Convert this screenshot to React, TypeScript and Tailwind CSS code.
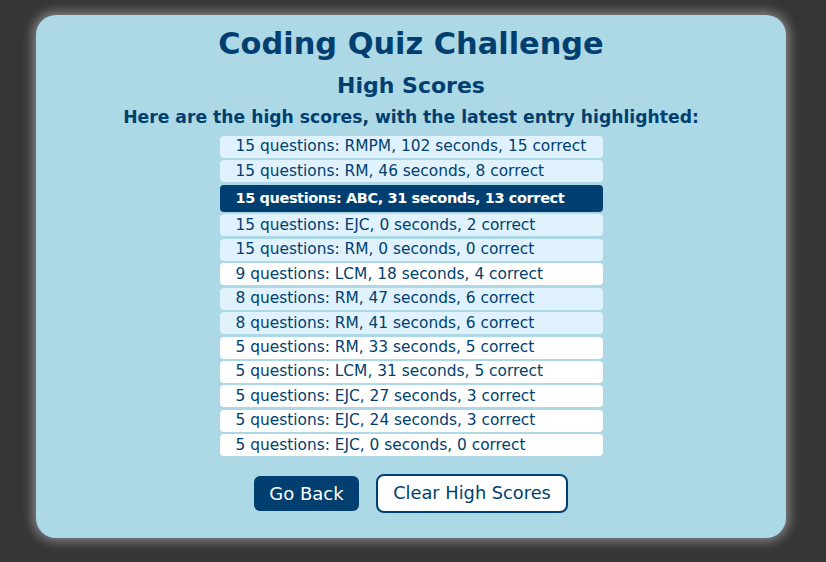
import React from "react";

type Score = { questions: number; initials: string; seconds: number; correct: number; latest?: boolean };

const scores: Score[] = [
  { questions: 15, initials: "RMPM", seconds: 102, correct: 15 },
  { questions: 15, initials: "RM", seconds: 46, correct: 8 },
  { questions: 15, initials: "ABC", seconds: 31, correct: 13, latest: true },
  { questions: 15, initials: "EJC", seconds: 0, correct: 2 },
  { questions: 15, initials: "RM", seconds: 0, correct: 0 },
  { questions: 9, initials: "LCM", seconds: 18, correct: 4 },
  { questions: 8, initials: "RM", seconds: 47, correct: 6 },
  { questions: 8, initials: "RM", seconds: 41, correct: 6 },
  { questions: 5, initials: "RM", seconds: 33, correct: 5 },
  { questions: 5, initials: "LCM", seconds: 31, correct: 5 },
  { questions: 5, initials: "EJC", seconds: 27, correct: 3 },
  { questions: 5, initials: "EJC", seconds: 24, correct: 3 },
  { questions: 5, initials: "EJC", seconds: 0, correct: 0 },
];

export default function App() {
  // alternate row shade per question-count group
  let group = 0;
  let prev = -1;
  const rows = scores.map((s) => {
    if (s.questions !== prev) {
      if (prev !== -1) group++;
      prev = s.questions;
    }
    return { ...s, shaded: group % 2 === 0 };
  });

  return (
    <div
      className="min-h-[562px] w-full bg-[#353535] pt-[15px] pb-[24px]"
      style={{ fontFamily: '"DejaVu Sans", sans-serif' }}
    >
      <div className="ml-[36px] w-[750px] rounded-[20px] bg-[#add8e6] pt-[10px] pb-[25px] flex flex-col items-center text-[#003f6f] shadow-[0_0_12px_3px_#8a8a8a]">
        <h1 className="text-[30.4px] leading-[38px] font-bold">Coding Quiz Challenge</h1>
        <h2 className="mt-[8px] text-[22px] leading-[30px] font-bold">High Scores</h2>
        <h3 className="mt-[4px] text-[17.2px] leading-[24px] font-bold">
          Here are the high scores, with the latest entry highlighted:
        </h3>

        <ul className="mt-[7px] w-[383px] flex flex-col gap-[2.45px]">
          {rows.map((s, i) => (
            <li
              key={i}
              className={
                s.latest
                  ? "h-[27px] rounded-[4px] bg-[#003f6f] px-[16px] flex items-center whitespace-nowrap text-[14.5px] tracking-[-0.4px] font-bold text-white"
                  : s.shaded
                  ? "h-[22px] rounded-[4px] bg-[#dff2fe] px-[16px] flex items-center whitespace-nowrap text-[15.4px]"
                  : "h-[22px] rounded-[4px] bg-white px-[16px] flex items-center whitespace-nowrap text-[15.4px]"
              }
            >
              {s.questions} questions: {s.initials}, {s.seconds} seconds, {s.correct} correct
            </li>
          ))}
        </ul>

        <div className="mt-[18px] flex items-center gap-[17px]">
          <button className="h-[35px] w-[105px] rounded-[6px] bg-[#003f6f] text-[18px] text-white">
            Go Back
          </button>
          <button className="h-[39px] w-[192px] rounded-[8px] border-2 border-[#003f6f] bg-white text-[17.8px] text-[#003f6f]">
            Clear High Scores
          </button>
        </div>
      </div>
    </div>
  );
}
